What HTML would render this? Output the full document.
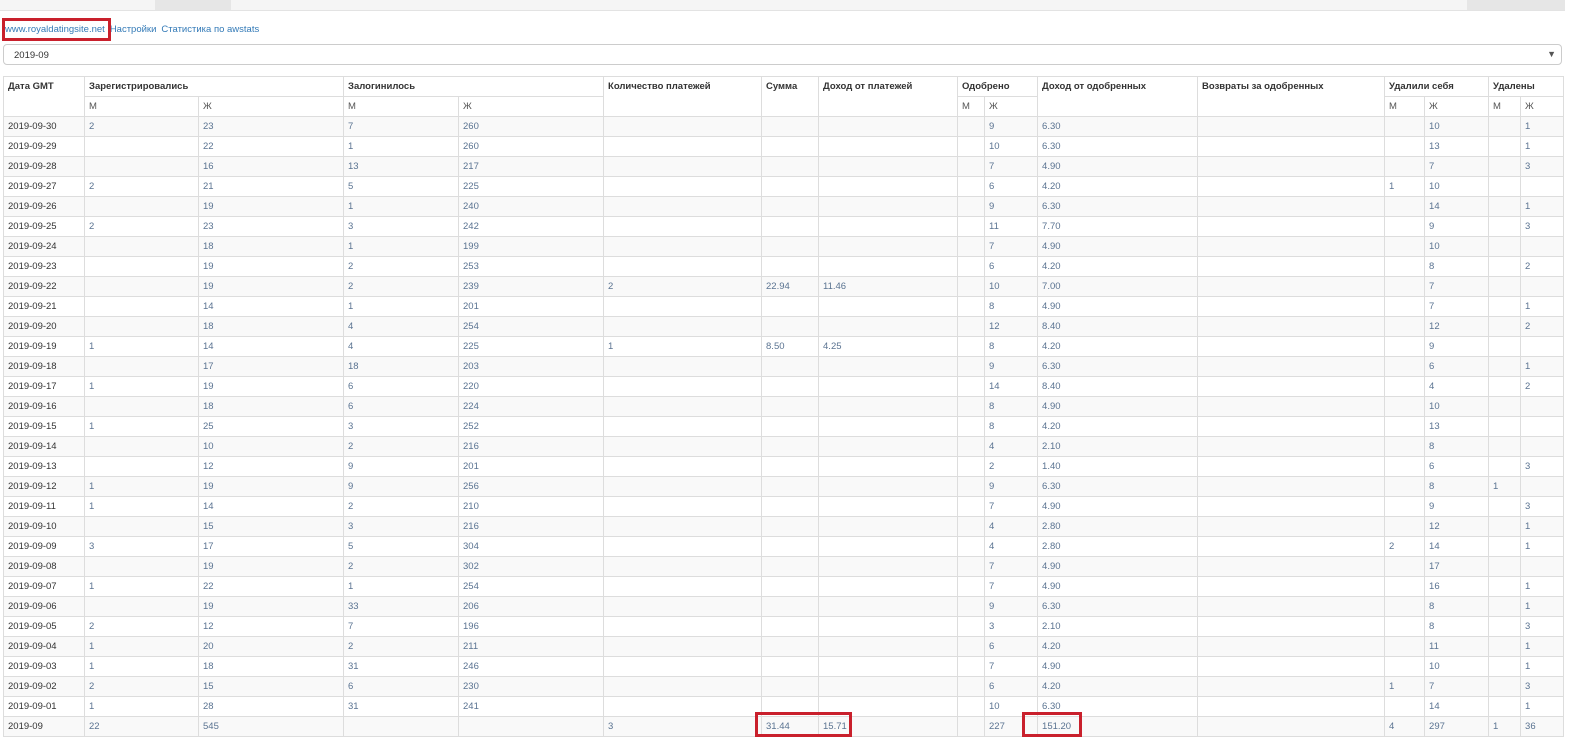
<!DOCTYPE html>
<html><head><meta charset="utf-8"><style>
body{margin:0;background:#fff;font-family:"Liberation Sans",Arial,sans-serif;font-size:9.5px;color:#333;width:1572px;height:740px;overflow:hidden;position:relative}
.top{position:absolute;left:0;top:0;width:1565px;height:10px;background:#f5f5f5;border-bottom:1px solid #e3e3e3}
.tab{position:absolute;top:0;height:10px;background:#e6e6e6}
.links{position:absolute;left:5px;top:24px;font-size:9.5px}
.links a{color:#337ab7;text-decoration:none;margin-right:5px}
.red{position:absolute;border:3px solid #c9202c;box-sizing:border-box}
.sel{position:absolute;left:3px;top:44px;width:1559px;height:21px;border:1px solid #ccc;border-radius:4px;box-sizing:border-box;padding:5px 10px;font-size:9.5px}
.sel span{position:absolute;right:5px;top:4px;font-size:9px;color:#555}
table{position:absolute;left:3px;top:76px;border-collapse:collapse;table-layout:fixed;width:1560px}
td,th{border:1px solid #ddd;height:19px;padding:0 4px;text-align:left;vertical-align:middle;white-space:nowrap;overflow:hidden;font-size:9.5px}
th{font-weight:bold;color:#333;vertical-align:top;padding-top:4px;height:15px}
th.s{font-weight:normal;color:#555;padding-top:0;vertical-align:middle;height:19px}
tbody tr:nth-child(odd){background:#f9f9f9}
tbody td{color:#5a7391}
tbody td:first-child{color:#333}
</style></head><body>
<div class="top"></div>
<div class="tab" style="left:155px;width:76px"></div>
<div class="tab" style="left:1467px;width:98px"></div>
<div class="links"><a>www.royaldatingsite.net</a><a>Настройки</a><a>Статистика по awstats</a></div>
<div class="red" style="left:2px;top:18px;width:109px;height:23px"></div>
<div class="sel">2019-09<span>▼</span></div>
<table>
<colgroup><col style="width:81px"><col style="width:114px"><col style="width:145px"><col style="width:115px"><col style="width:145px"><col style="width:158px"><col style="width:57px"><col style="width:139px"><col style="width:27px"><col style="width:53px"><col style="width:160px"><col style="width:187px"><col style="width:40px"><col style="width:64px"><col style="width:32px"><col style="width:43px"></colgroup>
<thead>
<tr><th rowspan="2">Дата GMT</th><th colspan="2">Зарегистрировались</th><th colspan="2">Залогинилось</th><th rowspan="2">Количество платежей</th><th rowspan="2">Сумма</th><th rowspan="2">Доход от платежей</th><th colspan="2">Одобрено</th><th rowspan="2">Доход от одобренных</th><th rowspan="2">Возвраты за одобренных</th><th colspan="2">Удалили себя</th><th colspan="2">Удалены</th></tr>
<tr><th class="s">М</th><th class="s">Ж</th><th class="s">М</th><th class="s">Ж</th><th class="s">М</th><th class="s">Ж</th><th class="s">М</th><th class="s">Ж</th><th class="s">М</th><th class="s">Ж</th></tr>
</thead>
<tbody>
<tr><td>2019-09-30</td><td>2</td><td>23</td><td>7</td><td>260</td><td></td><td></td><td></td><td></td><td>9</td><td>6.30</td><td></td><td></td><td>10</td><td></td><td>1</td></tr>
<tr><td>2019-09-29</td><td></td><td>22</td><td>1</td><td>260</td><td></td><td></td><td></td><td></td><td>10</td><td>6.30</td><td></td><td></td><td>13</td><td></td><td>1</td></tr>
<tr><td>2019-09-28</td><td></td><td>16</td><td>13</td><td>217</td><td></td><td></td><td></td><td></td><td>7</td><td>4.90</td><td></td><td></td><td>7</td><td></td><td>3</td></tr>
<tr><td>2019-09-27</td><td>2</td><td>21</td><td>5</td><td>225</td><td></td><td></td><td></td><td></td><td>6</td><td>4.20</td><td></td><td>1</td><td>10</td><td></td><td></td></tr>
<tr><td>2019-09-26</td><td></td><td>19</td><td>1</td><td>240</td><td></td><td></td><td></td><td></td><td>9</td><td>6.30</td><td></td><td></td><td>14</td><td></td><td>1</td></tr>
<tr><td>2019-09-25</td><td>2</td><td>23</td><td>3</td><td>242</td><td></td><td></td><td></td><td></td><td>11</td><td>7.70</td><td></td><td></td><td>9</td><td></td><td>3</td></tr>
<tr><td>2019-09-24</td><td></td><td>18</td><td>1</td><td>199</td><td></td><td></td><td></td><td></td><td>7</td><td>4.90</td><td></td><td></td><td>10</td><td></td><td></td></tr>
<tr><td>2019-09-23</td><td></td><td>19</td><td>2</td><td>253</td><td></td><td></td><td></td><td></td><td>6</td><td>4.20</td><td></td><td></td><td>8</td><td></td><td>2</td></tr>
<tr><td>2019-09-22</td><td></td><td>19</td><td>2</td><td>239</td><td>2</td><td>22.94</td><td>11.46</td><td></td><td>10</td><td>7.00</td><td></td><td></td><td>7</td><td></td><td></td></tr>
<tr><td>2019-09-21</td><td></td><td>14</td><td>1</td><td>201</td><td></td><td></td><td></td><td></td><td>8</td><td>4.90</td><td></td><td></td><td>7</td><td></td><td>1</td></tr>
<tr><td>2019-09-20</td><td></td><td>18</td><td>4</td><td>254</td><td></td><td></td><td></td><td></td><td>12</td><td>8.40</td><td></td><td></td><td>12</td><td></td><td>2</td></tr>
<tr><td>2019-09-19</td><td>1</td><td>14</td><td>4</td><td>225</td><td>1</td><td>8.50</td><td>4.25</td><td></td><td>8</td><td>4.20</td><td></td><td></td><td>9</td><td></td><td></td></tr>
<tr><td>2019-09-18</td><td></td><td>17</td><td>18</td><td>203</td><td></td><td></td><td></td><td></td><td>9</td><td>6.30</td><td></td><td></td><td>6</td><td></td><td>1</td></tr>
<tr><td>2019-09-17</td><td>1</td><td>19</td><td>6</td><td>220</td><td></td><td></td><td></td><td></td><td>14</td><td>8.40</td><td></td><td></td><td>4</td><td></td><td>2</td></tr>
<tr><td>2019-09-16</td><td></td><td>18</td><td>6</td><td>224</td><td></td><td></td><td></td><td></td><td>8</td><td>4.90</td><td></td><td></td><td>10</td><td></td><td></td></tr>
<tr><td>2019-09-15</td><td>1</td><td>25</td><td>3</td><td>252</td><td></td><td></td><td></td><td></td><td>8</td><td>4.20</td><td></td><td></td><td>13</td><td></td><td></td></tr>
<tr><td>2019-09-14</td><td></td><td>10</td><td>2</td><td>216</td><td></td><td></td><td></td><td></td><td>4</td><td>2.10</td><td></td><td></td><td>8</td><td></td><td></td></tr>
<tr><td>2019-09-13</td><td></td><td>12</td><td>9</td><td>201</td><td></td><td></td><td></td><td></td><td>2</td><td>1.40</td><td></td><td></td><td>6</td><td></td><td>3</td></tr>
<tr><td>2019-09-12</td><td>1</td><td>19</td><td>9</td><td>256</td><td></td><td></td><td></td><td></td><td>9</td><td>6.30</td><td></td><td></td><td>8</td><td>1</td><td></td></tr>
<tr><td>2019-09-11</td><td>1</td><td>14</td><td>2</td><td>210</td><td></td><td></td><td></td><td></td><td>7</td><td>4.90</td><td></td><td></td><td>9</td><td></td><td>3</td></tr>
<tr><td>2019-09-10</td><td></td><td>15</td><td>3</td><td>216</td><td></td><td></td><td></td><td></td><td>4</td><td>2.80</td><td></td><td></td><td>12</td><td></td><td>1</td></tr>
<tr><td>2019-09-09</td><td>3</td><td>17</td><td>5</td><td>304</td><td></td><td></td><td></td><td></td><td>4</td><td>2.80</td><td></td><td>2</td><td>14</td><td></td><td>1</td></tr>
<tr><td>2019-09-08</td><td></td><td>19</td><td>2</td><td>302</td><td></td><td></td><td></td><td></td><td>7</td><td>4.90</td><td></td><td></td><td>17</td><td></td><td></td></tr>
<tr><td>2019-09-07</td><td>1</td><td>22</td><td>1</td><td>254</td><td></td><td></td><td></td><td></td><td>7</td><td>4.90</td><td></td><td></td><td>16</td><td></td><td>1</td></tr>
<tr><td>2019-09-06</td><td></td><td>19</td><td>33</td><td>206</td><td></td><td></td><td></td><td></td><td>9</td><td>6.30</td><td></td><td></td><td>8</td><td></td><td>1</td></tr>
<tr><td>2019-09-05</td><td>2</td><td>12</td><td>7</td><td>196</td><td></td><td></td><td></td><td></td><td>3</td><td>2.10</td><td></td><td></td><td>8</td><td></td><td>3</td></tr>
<tr><td>2019-09-04</td><td>1</td><td>20</td><td>2</td><td>211</td><td></td><td></td><td></td><td></td><td>6</td><td>4.20</td><td></td><td></td><td>11</td><td></td><td>1</td></tr>
<tr><td>2019-09-03</td><td>1</td><td>18</td><td>31</td><td>246</td><td></td><td></td><td></td><td></td><td>7</td><td>4.90</td><td></td><td></td><td>10</td><td></td><td>1</td></tr>
<tr><td>2019-09-02</td><td>2</td><td>15</td><td>6</td><td>230</td><td></td><td></td><td></td><td></td><td>6</td><td>4.20</td><td></td><td>1</td><td>7</td><td></td><td>3</td></tr>
<tr><td>2019-09-01</td><td>1</td><td>28</td><td>31</td><td>241</td><td></td><td></td><td></td><td></td><td>10</td><td>6.30</td><td></td><td></td><td>14</td><td></td><td>1</td></tr>
<tr><td>2019-09</td><td>22</td><td>545</td><td></td><td></td><td>3</td><td>31.44</td><td>15.71</td><td></td><td>227</td><td>151.20</td><td></td><td>4</td><td>297</td><td>1</td><td>36</td></tr>
</tbody>
</table>
<div class="red" style="left:755px;top:712px;width:97px;height:25px"></div>
<div class="red" style="left:1022px;top:712px;width:60px;height:25px"></div>
</body></html>
